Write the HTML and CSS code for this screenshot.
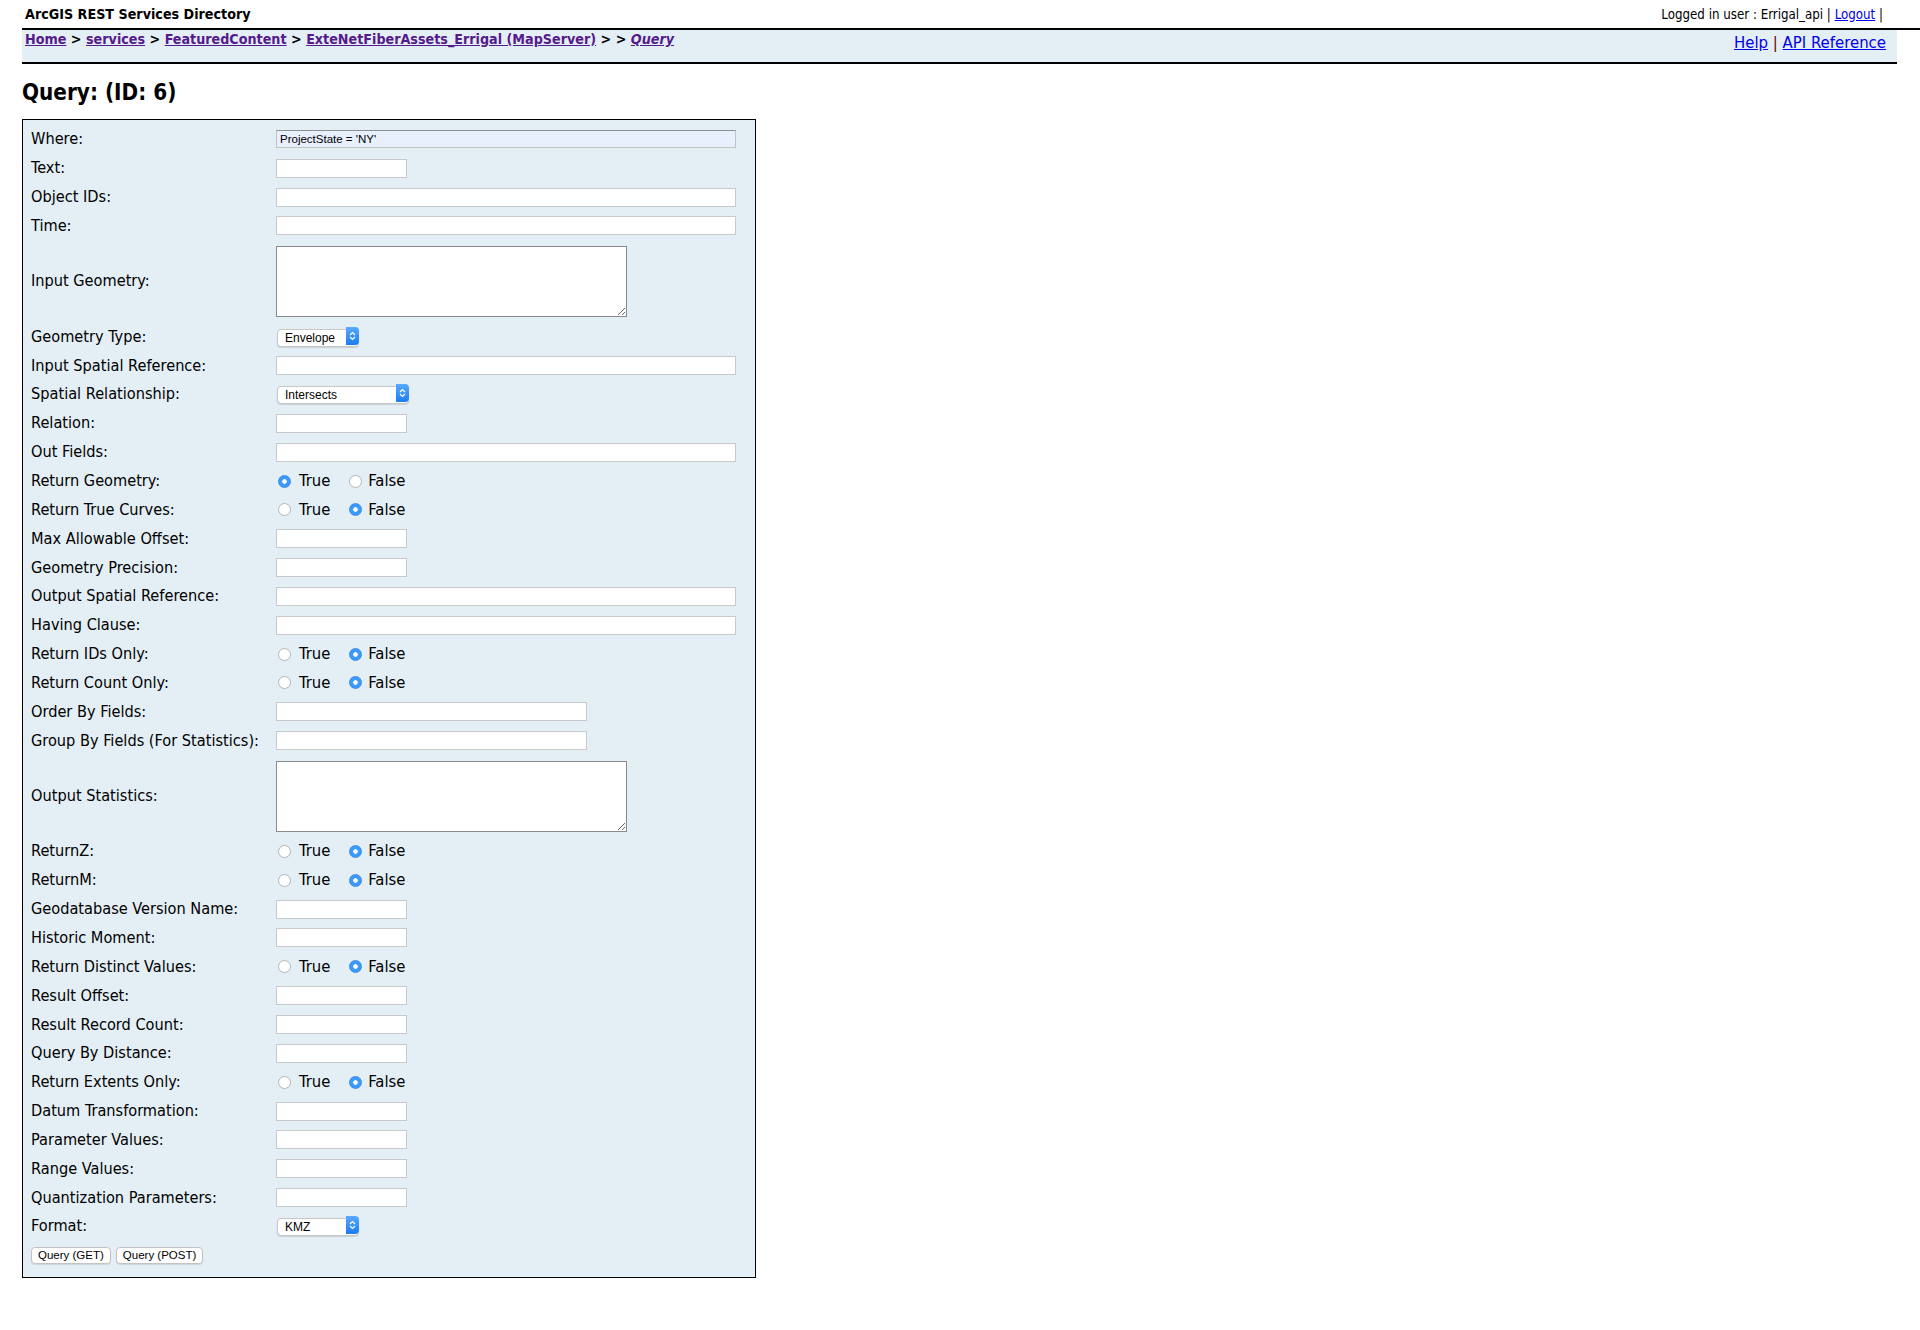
FILE: index.html
```html
<!DOCTYPE html>
<html lang="en">
<head>
    <meta charset="UTF-8">
    <title>Query: (ID: 6) - ArcGIS REST Services Directory</title>
    <link rel="stylesheet" href="styles.css">
</head>
<body>
    <header class="top-bar">
        <span class="app-title">ArcGIS REST Services Directory</span>
        <span class="user-info">Logged in user : Errigal_api | <a href="#">Logout</a> |</span>
    </header>

    <nav class="nav-bar">
        <div class="breadcrumbs">
            <a href="#">Home</a> &gt; <a href="#">services</a> &gt; <a href="#">FeaturedContent</a> &gt;
            <a href="#">ExteNetFiberAssets_Errigal (MapServer)</a> &gt; &gt; <a href="#"><i>Query</i></a>
        </div>
        <div class="help-links"><a href="#">Help</a> <span class="sep">|</span> <a href="#">API Reference</a></div>
    </nav>

    <h2 class="page-title">Query: (ID: 6)</h2>

    <form class="query-form">
        <div class="form-grid">
            <label>Where:</label>
            <div class="field"><input type="text" class="wide where" value="ProjectState = 'NY'"></div>

            <label>Text:</label>
            <div class="field"><input type="text" class="short"></div>

            <label>Object IDs:</label>
            <div class="field"><input type="text" class="wide"></div>

            <label>Time:</label>
            <div class="field"><input type="text" class="wide"></div>

            <label>Input Geometry:</label>
            <div class="field"><textarea></textarea></div>

            <label>Geometry Type:</label>
            <div class="field">
                <span class="select-wrap">
                    <select class="sel-geom"><option>Envelope</option></select>
                    <span class="select-arrow"><svg width="7" height="10" viewBox="0 0 7 10"><path d="M1 4 L3.5 1.5 L6 4 M1 6 L3.5 8.5 L6 6" fill="none" stroke="#fff" stroke-width="1.2"/></svg></span>
                </span>
            </div>

            <label>Input Spatial Reference:</label>
            <div class="field"><input type="text" class="wide"></div>

            <label>Spatial Relationship:</label>
            <div class="field">
                <span class="select-wrap">
                    <select class="sel-rel"><option>Intersects</option></select>
                    <span class="select-arrow"><svg width="7" height="10" viewBox="0 0 7 10"><path d="M1 4 L3.5 1.5 L6 4 M1 6 L3.5 8.5 L6 6" fill="none" stroke="#fff" stroke-width="1.2"/></svg></span>
                </span>
            </div>

            <label>Relation:</label>
            <div class="field"><input type="text" class="short"></div>

            <label>Out Fields:</label>
            <div class="field"><input type="text" class="wide"></div>

            <label>Return Geometry:</label>
            <div class="field radios">
                <label><input type="radio" name="rg" checked> True</label>
                <label><input type="radio" name="rg"> False</label>
            </div>

            <label>Return True Curves:</label>
            <div class="field radios">
                <label><input type="radio" name="rtc"> True</label>
                <label><input type="radio" name="rtc" checked> False</label>
            </div>

            <label>Max Allowable Offset:</label>
            <div class="field"><input type="text" class="short"></div>

            <label>Geometry Precision:</label>
            <div class="field"><input type="text" class="short"></div>

            <label>Output Spatial Reference:</label>
            <div class="field"><input type="text" class="wide"></div>

            <label>Having Clause:</label>
            <div class="field"><input type="text" class="wide"></div>

            <label>Return IDs Only:</label>
            <div class="field radios">
                <label><input type="radio" name="rid"> True</label>
                <label><input type="radio" name="rid" checked> False</label>
            </div>

            <label>Return Count Only:</label>
            <div class="field radios">
                <label><input type="radio" name="rco"> True</label>
                <label><input type="radio" name="rco" checked> False</label>
            </div>

            <label>Order By Fields:</label>
            <div class="field"><input type="text" class="medium"></div>

            <label>Group By Fields (For Statistics):</label>
            <div class="field"><input type="text" class="medium"></div>

            <label>Output Statistics:</label>
            <div class="field"><textarea></textarea></div>

            <label>ReturnZ:</label>
            <div class="field radios">
                <label><input type="radio" name="rz"> True</label>
                <label><input type="radio" name="rz" checked> False</label>
            </div>

            <label>ReturnM:</label>
            <div class="field radios">
                <label><input type="radio" name="rm"> True</label>
                <label><input type="radio" name="rm" checked> False</label>
            </div>

            <label>Geodatabase Version Name:</label>
            <div class="field"><input type="text" class="short"></div>

            <label>Historic Moment:</label>
            <div class="field"><input type="text" class="short"></div>

            <label>Return Distinct Values:</label>
            <div class="field radios">
                <label><input type="radio" name="rdv"> True</label>
                <label><input type="radio" name="rdv" checked> False</label>
            </div>

            <label>Result Offset:</label>
            <div class="field"><input type="text" class="short"></div>

            <label>Result Record Count:</label>
            <div class="field"><input type="text" class="short"></div>

            <label>Query By Distance:</label>
            <div class="field"><input type="text" class="short"></div>

            <label>Return Extents Only:</label>
            <div class="field radios">
                <label><input type="radio" name="reo"> True</label>
                <label><input type="radio" name="reo" checked> False</label>
            </div>

            <label>Datum Transformation:</label>
            <div class="field"><input type="text" class="short"></div>

            <label>Parameter Values:</label>
            <div class="field"><input type="text" class="short"></div>

            <label>Range Values:</label>
            <div class="field"><input type="text" class="short"></div>

            <label>Quantization Parameters:</label>
            <div class="field"><input type="text" class="short"></div>

            <label>Format:</label>
            <div class="field">
                <span class="select-wrap">
                    <select class="sel-format"><option>KMZ</option></select>
                    <span class="select-arrow"><svg width="7" height="10" viewBox="0 0 7 10"><path d="M1 4 L3.5 1.5 L6 4 M1 6 L3.5 8.5 L6 6" fill="none" stroke="#fff" stroke-width="1.2"/></svg></span>
                </span>
            </div>
        </div>

        <div class="buttons">
            <button type="button">Query (GET)</button>
            <button type="button">Query (POST)</button>
        </div>
    </form>
</body>
</html>
```

FILE: styles.css
```css
body {
    margin: 0 0 0 22px;
    font-family: "DejaVu Sans Condensed", "Liberation Sans", sans-serif;
    color: #000;
    background-color: #fff;
}

a {
    color: #0000ee;
}

/* top header */
.top-bar {
    display: flex;
    justify-content: space-between;
    align-items: center;
    height: 28px;
    padding: 0 37px 0 3px;
    border-bottom: 2px solid #000;
}

.app-title {
    font-weight: bold;
    font-size: 14.2px;
}

.user-info {
    font-size: 13.2px;
}

/* breadcrumb bar */
.nav-bar {
    display: flex;
    justify-content: space-between;
    align-items: flex-start;
    height: 32px;
    margin-right: 23px;
    padding: 0 11px 0 3px;
    background-color: #e4eef5;
    border-bottom: 2px solid #000;
}

.breadcrumbs {
    font-size: 14.2px;
    font-weight: bold;
    line-height: 18px;
}

.breadcrumbs a {
    color: #551a8b;
}

.help-links {
    font-size: 16.6px;
    line-height: 19px;
    padding-top: 3px;
}

.help-links .sep {
    color: #600;
}

.page-title {
    font-size: 22.3px;
    line-height: 25px;
    margin: 16px 0 14px;
}

/* query form */
.query-form {
    width: 716px;
    padding: 5px 8px 9px 8px;
    background-color: #e4eef5;
    border: 1px solid #000;
}

.form-grid {
    display: grid;
    grid-template-columns: 245px 1fr;
    grid-auto-rows: minmax(28.85px, auto);
    align-items: center;
}

.form-grid > label {
    font-size: 16.2px;
    line-height: 18px;
}

.field {
    display: flex;
    align-items: center;
}

input[type="text"] {
    box-sizing: border-box;
    height: 19px;
    margin: 0;
    padding: 1px 4px;
    font-family: "Liberation Sans", sans-serif;
    font-size: 11.5px;
    background-color: #fff;
    border: 1px solid #c9c9c9;
}

input.wide {
    width: 460px;
}

input.short {
    width: 131px;
}

input.medium {
    width: 311px;
}

input.where {
    height: 18px;
    background-color: #e8f0fd;
    border-color: #c2c2c2;
    border-top-color: #8f8f8f;
    padding-left: 3px;
}

textarea {
    box-sizing: border-box;
    width: 351px;
    height: 71px;
    margin: 6px 0 5px;
    border: 1px solid #8a8a8a;
    background-color: #fff;
    resize: both;
}

/* mac style select boxes */
.select-wrap {
    position: relative;
    display: inline-block;
    margin-left: 1px;
}

.select-wrap select {
    appearance: none;
    -webkit-appearance: none;
    box-sizing: border-box;
    height: 18px;
    padding: 0 16px 0 7px;
    font-family: "Liberation Sans", sans-serif;
    font-size: 12px;
    background-color: #fff;
    border: 1px solid #c7c7c7;
    border-radius: 4px;
    box-shadow: 0 1px 1px rgba(0, 0, 0, 0.12);
}

.sel-geom {
    width: 82px;
}

.sel-rel {
    width: 132px;
}

.sel-format {
    width: 82px;
}

.select-arrow {
    position: absolute;
    top: 0;
    right: 0;
    width: 13px;
    height: 18px;
    display: flex;
    align-items: center;
    justify-content: center;
    background: linear-gradient(#5aaafc, #1b7cf2);
    border-radius: 0 4px 4px 0;
}

/* radio buttons */
.radios label {
    display: flex;
    align-items: center;
    font-size: 16.5px;
    line-height: 18px;
}

.radios label + label {
    margin-left: 17px;
}

input[type="radio"] {
    appearance: none;
    -webkit-appearance: none;
    width: 13px;
    height: 13px;
    margin: 0 8px 0 2px;
    border: 1px solid #b4b4b4;
    border-radius: 50%;
    background-color: #fff;
}

input[type="radio"]:checked {
    border-color: #3a8ee6;
    background: radial-gradient(circle, #fff 0 2px, #3b99fc 2.5px);
}

.radios label + label input[type="radio"] {
    margin-right: 6px;
}

.buttons {
    display: flex;
    gap: 5px;
    padding: 6px 0 4px;
}

.buttons button {
    height: 17px;
    padding: 0 6px;
    font-family: "Liberation Sans", sans-serif;
    font-size: 11.5px;
    background-color: #fff;
    border: 1px solid #c3c3c3;
    border-radius: 4px;
    box-shadow: 0 1px 1px rgba(0, 0, 0, 0.1);
}
```
